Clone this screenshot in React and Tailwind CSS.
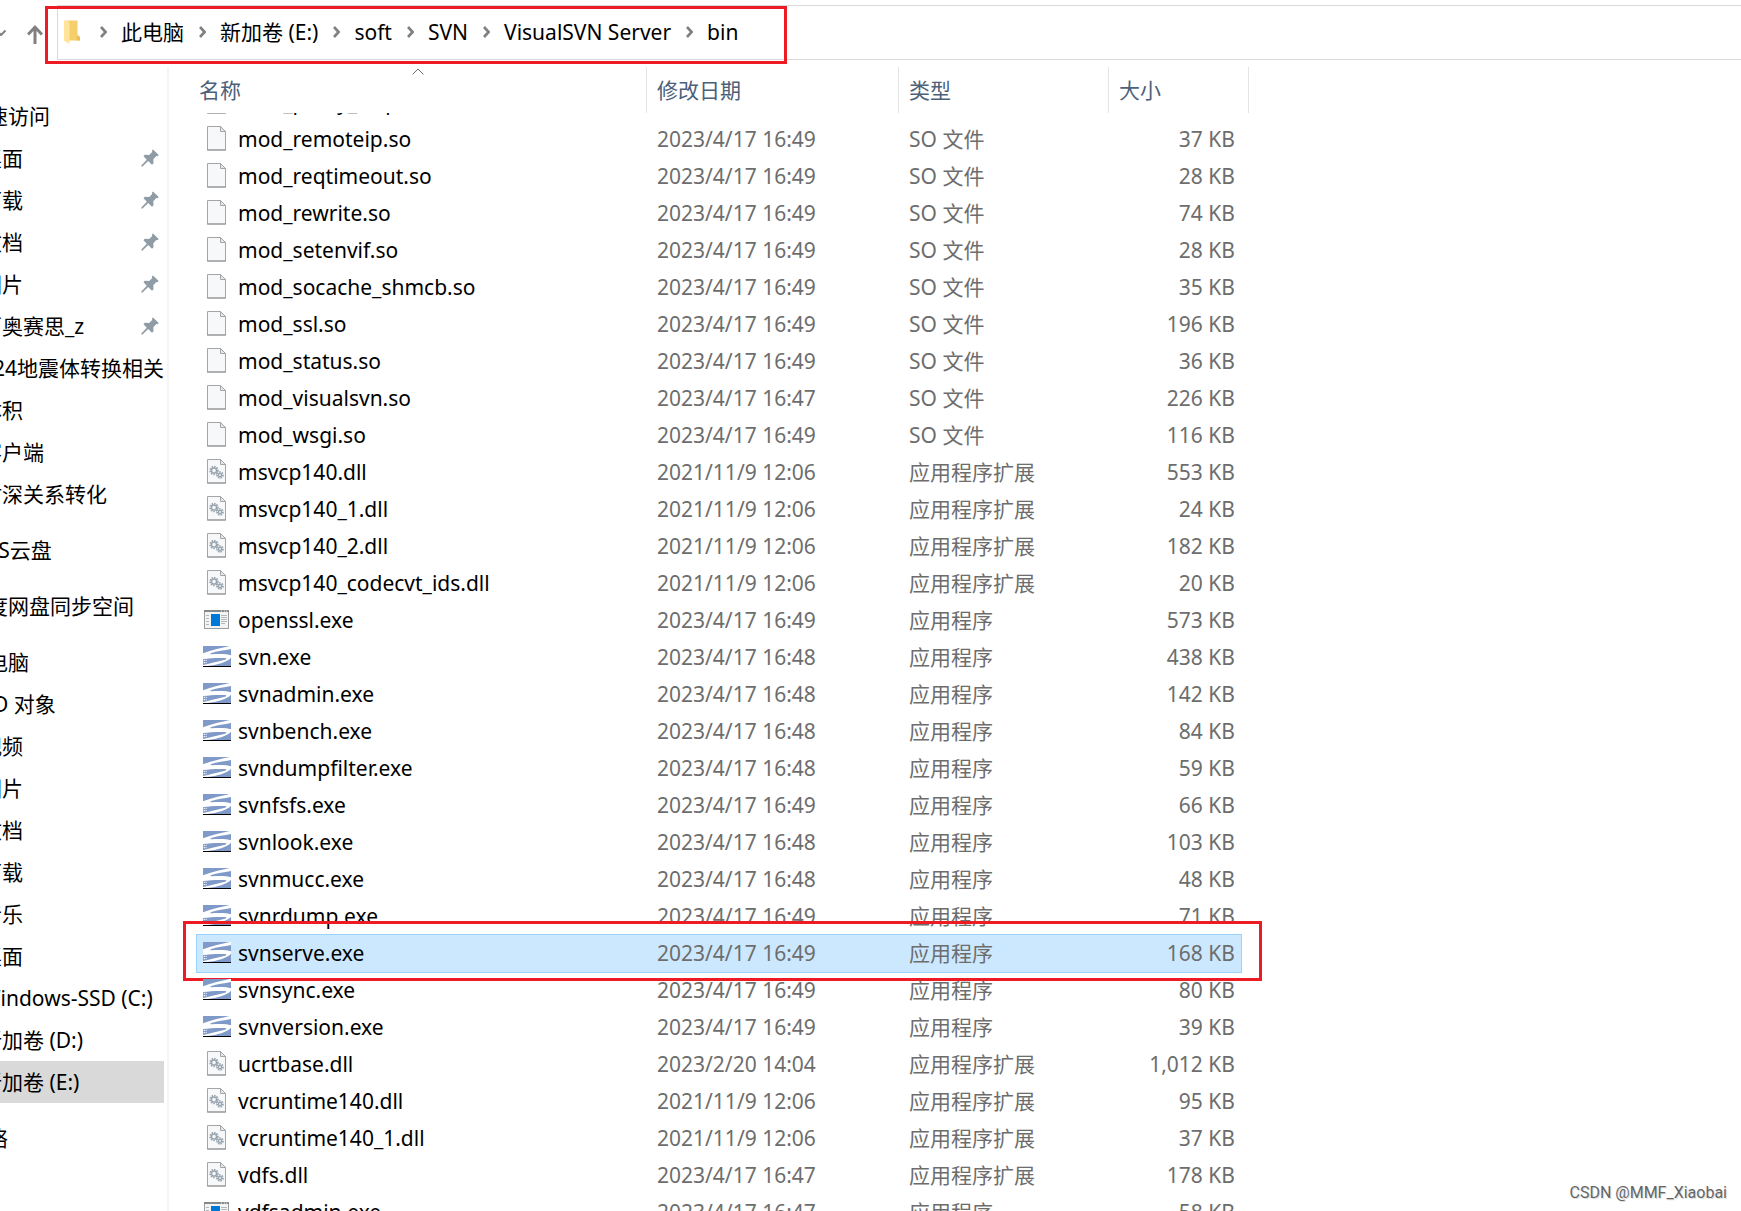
import React, { useState } from 'react';

const crumbs = ['此电脑', '新加卷 (E:)', 'soft', 'SVN', 'VisualSVN Server', 'bin'];

// Tree on the left, one array per block
const navGroups = [
  [
    { name: '快速访问', root: true },
    { name: '桌面', pinned: true },
    { name: '下载', pinned: true },
    { name: '文档', pinned: true },
    { name: '图片', pinned: true },
    { name: '百奥赛思_z', pinned: true },
    { name: '024地震体转换相关资料' },
    { name: '体积' },
    { name: '客户端' },
    { name: '时深关系转化' },
  ],
  [{ name: 'WPS云盘', root: true }],
  [{ name: '百度网盘同步空间', root: true }],
  [
    { name: '此电脑', root: true },
    { name: '3D 对象' },
    { name: '视频' },
    { name: '图片' },
    { name: '文档' },
    { name: '下载' },
    { name: '音乐' },
    { name: '桌面' },
    { name: 'Windows-SSD (C:)' },
    { name: '新加卷 (D:)' },
    { name: '新加卷 (E:)', current: true },
  ],
  [{ name: '网络', root: true }],
];

const SO = 'SO 文件';
const DLL = '应用程序扩展';
const EXE = '应用程序';

const files = [
  { name: 'mod_remoteip.so', date: '2023/4/17 16:49', type: SO, size: '37 KB', icon: 'file' },
  { name: 'mod_reqtimeout.so', date: '2023/4/17 16:49', type: SO, size: '28 KB', icon: 'file' },
  { name: 'mod_rewrite.so', date: '2023/4/17 16:49', type: SO, size: '74 KB', icon: 'file' },
  { name: 'mod_setenvif.so', date: '2023/4/17 16:49', type: SO, size: '28 KB', icon: 'file' },
  { name: 'mod_socache_shmcb.so', date: '2023/4/17 16:49', type: SO, size: '35 KB', icon: 'file' },
  { name: 'mod_ssl.so', date: '2023/4/17 16:49', type: SO, size: '196 KB', icon: 'file' },
  { name: 'mod_status.so', date: '2023/4/17 16:49', type: SO, size: '36 KB', icon: 'file' },
  { name: 'mod_visualsvn.so', date: '2023/4/17 16:47', type: SO, size: '226 KB', icon: 'file' },
  { name: 'mod_wsgi.so', date: '2023/4/17 16:49', type: SO, size: '116 KB', icon: 'file' },
  { name: 'msvcp140.dll', date: '2021/11/9 12:06', type: DLL, size: '553 KB', icon: 'dll' },
  { name: 'msvcp140_1.dll', date: '2021/11/9 12:06', type: DLL, size: '24 KB', icon: 'dll' },
  { name: 'msvcp140_2.dll', date: '2021/11/9 12:06', type: DLL, size: '182 KB', icon: 'dll' },
  { name: 'msvcp140_codecvt_ids.dll', date: '2021/11/9 12:06', type: DLL, size: '20 KB', icon: 'dll' },
  { name: 'openssl.exe', date: '2023/4/17 16:49', type: EXE, size: '573 KB', icon: 'exe' },
  { name: 'svn.exe', date: '2023/4/17 16:48', type: EXE, size: '438 KB', icon: 'svn' },
  { name: 'svnadmin.exe', date: '2023/4/17 16:48', type: EXE, size: '142 KB', icon: 'svn' },
  { name: 'svnbench.exe', date: '2023/4/17 16:48', type: EXE, size: '84 KB', icon: 'svn' },
  { name: 'svndumpfilter.exe', date: '2023/4/17 16:48', type: EXE, size: '59 KB', icon: 'svn' },
  { name: 'svnfsfs.exe', date: '2023/4/17 16:49', type: EXE, size: '66 KB', icon: 'svn' },
  { name: 'svnlook.exe', date: '2023/4/17 16:48', type: EXE, size: '103 KB', icon: 'svn' },
  { name: 'svnmucc.exe', date: '2023/4/17 16:48', type: EXE, size: '48 KB', icon: 'svn' },
  { name: 'svnrdump.exe', date: '2023/4/17 16:49', type: EXE, size: '71 KB', icon: 'svn' },
  { name: 'svnserve.exe', date: '2023/4/17 16:49', type: EXE, size: '168 KB', icon: 'svn' },
  { name: 'svnsync.exe', date: '2023/4/17 16:49', type: EXE, size: '80 KB', icon: 'svn' },
  { name: 'svnversion.exe', date: '2023/4/17 16:49', type: EXE, size: '39 KB', icon: 'svn' },
  { name: 'ucrtbase.dll', date: '2023/2/20 14:04', type: DLL, size: '1,012 KB', icon: 'dll' },
  { name: 'vcruntime140.dll', date: '2021/11/9 12:06', type: DLL, size: '95 KB', icon: 'dll' },
  { name: 'vcruntime140_1.dll', date: '2021/11/9 12:06', type: DLL, size: '37 KB', icon: 'dll' },
  { name: 'vdfs.dll', date: '2023/4/17 16:47', type: DLL, size: '178 KB', icon: 'dll' },
  { name: 'vdfsadmin.exe', date: '2023/4/17 16:47', type: EXE, size: '58 KB', icon: 'exe' },
];

const FolderIcon = () => (
  <svg width="17" height="24" viewBox="0 0 17 24" aria-hidden="true">
    <path d="M3 0.5h10.5v14.5l2.5 2v3.5H3z" fill="#f5cf6b" />
    <path d="M0 0.5h4l1.5 2.2V24L0 20.8z" fill="#ffe49a" />
    <path d="M13.5 15l2.5 2v3.5h-3.5z" fill="#eebf52" />
  </svg>
);

const CrumbArrow = () => (
  <svg width="7" height="12" viewBox="0 0 7 12" fill="none" stroke="#808080" strokeWidth="2.6" aria-hidden="true">
    <path d="M1 1l4.6 5L1 11" />
  </svg>
);

const PinIcon = () => (
  <svg width="18" height="18" viewBox="0 0 18 18" fill="#8f9ba5" aria-hidden="true">
    <path d="M12 0.5L17.7 6L16.5 7.2L15.3 7L12.3 10.3L12.5 14.2L11 15.7L7.2 12L1.3 17.7L0.5 17.5L0.3 16.5L5.8 10.7L2.5 7.3L3.8 5.8L8.2 5.9L11.2 3L11 1.6Z" />
  </svg>
);

const Page = () => (
  <>
    <path d="M0.5 0.5h13l5 5v18.5h-18z" fill="#f7f8f9" stroke="#a3a5a7" />
    <path d="M0 24h19" stroke="#8d9092" />
    <path d="M13.5 0.5v5h5z" fill="#e6e7e8" stroke="#a3a5a7" />
  </>
);

const Cog = ({ x, y, r }) => (
  <g transform={`translate(${x} ${y})`} fill="none" stroke="#98a5b0">
    <circle r={r} strokeWidth="1.8" strokeDasharray="1.5 1" />
    <circle r={r - 1.3} strokeWidth="1.4" />
  </g>
);

const FileIcon = ({ kind }) => {
  if (kind === 'svn') {
    return (
      <svg width="28" height="21" viewBox="0 0 84 63" aria-hidden="true">
        <rect width="84" height="60" fill="#fff" />
        <path d="M0 0h80C56 5 26 12 0 22z" fill="#7f9ac9" />
        <path d="M84 9v19c-10-4-34-5-58-3c-5 0-5-2-1-4C42 15 64 14 84 9z" fill="#7f9ac9" />
        <path d="M0 39c18-2 42-4 66-3c6 1 5 3 0 5C50 46 34 48 14 54c-4 1-8 2-14 3z" fill="#7f9ac9" />
        <path d="M84 35v25H14C42 56 72 49 84 35z" fill="#7f9ac9" />
        <path d="M2 43h9M2 50h9" stroke="#fff" strokeWidth="3" strokeDasharray="4 2" />
        <rect y="60" width="84" height="3" fill="#000" />
      </svg>
    );
  }
  if (kind === 'exe') {
    return (
      <svg width="26" height="19" viewBox="0 0 26 19" aria-hidden="true">
        <rect x="0.5" y="0.5" width="24" height="18" fill="#f3f4f4" stroke="#9a9da0" />
        <path d="M0 1h25" stroke="#85898c" strokeWidth="2" />
        <path d="M17 1h1M20 1h1M22 1h1" stroke="#e8e8e8" />
        <rect x="7" y="4" width="9" height="12" fill="#0078d7" />
        <path d="M2 5.5h3M2 8.5h3M2 11.5h3M2 14.5h3M17 5.5h6M17 7.5h6M17 9.5h6M17 11.5h6M17 13.5h4" stroke="#b4b7ba" />
      </svg>
    );
  }
  return (
    <svg width="20" height="25" viewBox="0 0 20 25" aria-hidden="true">
      <Page />
      {kind === 'dll' && (
        <>
          <Cog x={7} y={11.5} r={3.8} />
          <Cog x={13} y={16} r={2.9} />
        </>
      )}
    </svg>
  );
};

const NameCell = ({ name, icon }) => (
  <div className="flex h-[37px] items-center gap-[7px] pb-[2px] pl-[7px]">
    <span className="flex w-7 shrink-0 justify-center">
      <FileIcon kind={icon} />
    </span>
    <span className="truncate text-black">{name}</span>
  </div>
);

const AddressBar = () => (
  <header className="flex h-[67px] shrink-0 items-start pt-[5px]">
    <div className="flex h-[55px] w-[57px] shrink-0 items-center">
      <button type="button" aria-label="最近浏览的位置" className="-ml-1 mr-[21px]">
        <svg width="10" height="6" viewBox="0 0 10 6" fill="none" stroke="#808080" strokeWidth="2" aria-hidden="true">
          <path d="M0.5 0.5L5 5l4.5-4.5" />
        </svg>
      </button>
      <button type="button" aria-label="上移" className="pt-1">
        <svg width="16" height="19" viewBox="0 0 16 19" fill="none" stroke="#808080" strokeWidth="3" aria-hidden="true">
          <path d="M8 19V2M1 9.5L8 2.2l7 7.3" />
        </svg>
      </button>
    </div>
    <div className="flex h-[55px] flex-1 border-y border-l border-[#d9d9d9]">
      <nav aria-label="地址" className="relative flex items-center pb-px pl-[6px]">
        <FolderIcon />
        <ol className="ml-1 flex items-center">
          {crumbs.map((c) => (
            <li key={c} className="flex items-center gap-[14px] pl-[15px]">
              <CrumbArrow />
              <a href="#" className="text-black">{c}</a>
            </li>
          ))}
        </ol>
        <div className="pointer-events-none absolute -bottom-[5px] -left-[13px] -right-[49px] top-0 border-3 border-[#ed1c24]" />
      </nav>
    </div>
  </header>
);

const Sidebar = () => (
  <nav aria-label="导航窗格" className="w-[169px] shrink-0 overflow-hidden border-r-2 border-[#f5f5f5] pt-7">
    {navGroups.map((group, i) => (
      <ul key={i} className="mb-[14px]">
        {group.map((item) => (
          <li key={item.name} className={item.current ? 'mr-[3px] bg-[#d9d9d9]' : 'mr-[3px]'}>
            <a href="#" className="flex h-[42px] items-center overflow-hidden whitespace-nowrap pr-[5px] text-black">
              <span className={item.root ? '-ml-[34px] flex-1' : '-ml-[19px] flex-1'}>{item.name}</span>
              {item.pinned && <PinIcon />}
            </a>
          </li>
        ))}
      </ul>
    ))}
  </nav>
);

const FileTable = () => {
  const [selected, setSelected] = useState('svnserve.exe');

  return (
    <table className="w-[1053px] table-fixed border-separate border-spacing-0 text-left text-[#6d6d6d]">
      <colgroup>
        <col className="w-[451px]" />
        <col className="w-[252px]" />
        <col className="w-[210px]" />
        <col className="w-[140px]" />
      </colgroup>
      <thead>
        <tr className="h-[46px] text-[#4c607a]">
          <th className="relative border-r border-[#e5e5e5] p-0 pl-[3px] font-normal">
            名称
            <span className="absolute inset-x-0 top-0 flex justify-center pr-[6px] pt-px">
              <svg width="12" height="7" viewBox="0 0 12 7" fill="none" stroke="#6d6d6d" aria-hidden="true">
                <path d="M0.5 6.5L6 1l5.5 5.5" />
              </svg>
            </span>
          </th>
          <th className="border-r border-[#e5e5e5] p-0 pl-[10px] font-normal">修改日期</th>
          <th className="border-r border-[#e5e5e5] p-0 pl-[10px] font-normal">类型</th>
          <th className="border-r border-[#e5e5e5] p-0 pl-[10px] font-normal">大小</th>
        </tr>
      </thead>
      <tbody>
        {/* row scrolled under the header, only its lower edge shows */}
        <tr>
          <td colSpan={4} className="p-0">
            <div className="flex h-2 items-end overflow-hidden">
              <NameCell name="mod_proxy_http.so" icon="file" />
            </div>
          </td>
        </tr>
        {files.map((f) => (
          <tr key={f.name} className="relative isolate h-[37px]" onClick={() => setSelected(f.name)}>
            <td className="p-0">
              {selected === f.name && (
                <>
                  <div className="absolute -bottom-px -top-px left-0 right-[7px] -z-10 border border-[#99d1ff] bg-[#cce8ff]" />
                  <div className="pointer-events-none absolute -bottom-[9px] -left-[13px] -right-[13px] -top-[14px] z-10 border-3 border-[#ed1c24]" />
                </>
              )}
              <NameCell name={f.name} icon={f.icon} />
            </td>
            <td className="p-0 pb-[2px] pl-[10px]">{f.date}</td>
            <td className="p-0 pb-[2px] pl-[10px]">{f.type}</td>
            <td className="p-0 pb-[2px] pr-[14px] text-right">{f.size}</td>
          </tr>
        ))}
      </tbody>
    </table>
  );
};

const App = () => {
  return (
    <div className="relative flex h-screen flex-col overflow-hidden bg-white font-['Noto_Sans','Noto_Sans_CJK_SC',sans-serif] text-[21px] leading-7">
      <AddressBar />
      <div className="flex min-h-0 flex-1">
        <Sidebar />
        <main className="flex-1 overflow-hidden pl-[27px]">
          <FileTable />
        </main>
      </div>
      <span className="absolute bottom-[6px] right-[14px] font-['Roboto','Liberation_Sans',sans-serif] text-base leading-6 text-[#666] [text-shadow:1px_1px_0_#ddd]">
        CSDN @MMF_Xiaobai
      </span>
    </div>
  );
};

export default App;
